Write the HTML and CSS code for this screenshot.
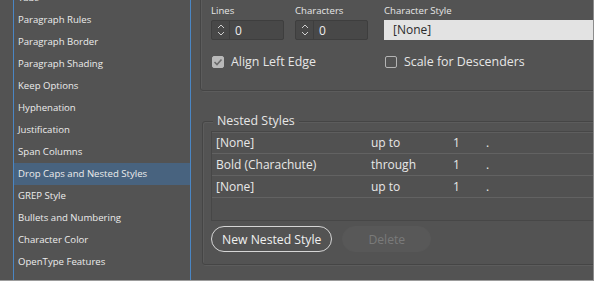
FILE: index.html
```html
<!DOCTYPE html>
<html lang="en">
<head>
    <meta charset="UTF-8">
    <title>Paragraph Style Options</title>
    <link rel="stylesheet" href="styles.css">
</head>
<body>
    <div class="window">
        <div class="sidebar">
            <ul class="category-list">
                <li>Tabs</li>
                <li>Paragraph Rules</li>
                <li>Paragraph Border</li>
                <li>Paragraph Shading</li>
                <li>Keep Options</li>
                <li>Hyphenation</li>
                <li>Justification</li>
                <li>Span Columns</li>
                <li class="selected">Drop Caps and Nested Styles</li>
                <li>GREP Style</li>
                <li>Bullets and Numbering</li>
                <li>Character Color</li>
                <li>OpenType Features</li>
                <li>Underline Options</li>
            </ul>
        </div>

        <div class="main">
            <div class="group drop-caps">
                <div class="field-row">
                    <div class="field lines-field">
                        <div class="field-label">Lines</div>
                        <div class="spinner">
                            <span class="arrows">
                                <svg width="10" height="16" viewBox="0 0 10 16">
                                    <path d="M2 6 L5 3 L8 6" fill="none" stroke="#cfcfcf" stroke-width="1"/>
                                    <path d="M2 10 L5 13 L8 10" fill="none" stroke="#cfcfcf" stroke-width="1"/>
                                </svg>
                            </span>
                            <span class="spin-value">0</span>
                        </div>
                    </div>
                    <div class="field chars-field">
                        <div class="field-label">Characters</div>
                        <div class="spinner">
                            <span class="arrows">
                                <svg width="10" height="16" viewBox="0 0 10 16">
                                    <path d="M2 6 L5 3 L8 6" fill="none" stroke="#cfcfcf" stroke-width="1"/>
                                    <path d="M2 10 L5 13 L8 10" fill="none" stroke="#cfcfcf" stroke-width="1"/>
                                </svg>
                            </span>
                            <span class="spin-value">0</span>
                        </div>
                    </div>
                    <div class="field style-field">
                        <div class="field-label">Character Style</div>
                        <div class="dropdown">[None]</div>
                    </div>
                </div>

                <div class="check-row">
                    <label class="check align-check">
                        <span class="box checked">
                            <svg width="12" height="12" viewBox="0 0 12 12">
                                <path d="M2.5 6 L5 8.5 L9.5 3.5" fill="none" stroke="#6b6b6b" stroke-width="1.6"/>
                            </svg>
                        </span>
                        Align Left Edge
                    </label>
                    <label class="check scale-check">
                        <span class="box"></span>
                        Scale for Descenders
                    </label>
                </div>
            </div>

            <div class="group nested">
                <div class="group-title">Nested Styles</div>
                <div class="nested-table">
                    <div class="nested-row">
                        <span class="col-style">[None]</span>
                        <span class="col-mode">up to</span>
                        <span class="col-count">1</span>
                        <span class="col-delim">.</span>
                    </div>
                    <div class="nested-row">
                        <span class="col-style">Bold (Charachute)</span>
                        <span class="col-mode">through</span>
                        <span class="col-count">1</span>
                        <span class="col-delim">.</span>
                    </div>
                    <div class="nested-row">
                        <span class="col-style">[None]</span>
                        <span class="col-mode">up to</span>
                        <span class="col-count">1</span>
                        <span class="col-delim">.</span>
                    </div>
                </div>
                <div class="button-row">
                    <button class="pill-btn">New Nested Style</button>
                    <button class="pill-btn disabled">Delete</button>
                </div>
            </div>
        </div>
    </div>
</body>
</html>
```

FILE: styles.css
```css
html, body {
    margin: 0;
    padding: 0;
    background-color: #535353;
    overflow: hidden;
}

body {
    font-family: 'Open Sans', 'Noto Sans', sans-serif;
    color: #e2e2e2;
}

.window {
    width: 593px;
    height: 280px;
    display: flex;
    overflow: hidden;
    border-right: 1px solid #8c8c8c;
    border-bottom: 1px solid #9c9c9c;
    background-color: #535353;
}

/* category list on the left */
.sidebar {
    width: 176px;
    margin-left: 13px;
    flex-shrink: 0;
    border-left: 1px solid #4a86c4;
    border-right: 1px solid #4a86c4;
    overflow: hidden;
}

.category-list {
    list-style: none;
    margin: -13px 0 0 0;
    padding: 0;
}

.category-list li {
    height: 22px;
    line-height: 22px;
    padding-left: 4px;
    font-size: 9.6px;
    color: #ececec;
    white-space: nowrap;
}

.category-list li.selected {
    background-color: #48637f;
}

/* right hand panel */
.main {
    flex: 1;
    position: relative;
    overflow: hidden;
}

.group {
    border: 1px solid #454545;
    box-shadow: 1px 1px 0 #5c5c5c, inset 1px 1px 0 #5c5c5c;
    border-radius: 3px;
}

.drop-caps {
    margin: -12px -20px 0 9px;
    height: 103px;
    padding: 0 0 0 10px;
    box-sizing: border-box;
}

.field-row {
    display: flex;
    margin-top: 15px;
}

.field-label {
    font-size: 9.6px;
    color: #e6e6e6;
    height: 16px;
    line-height: 14px;
}

.lines-field,
.chars-field {
    width: 84px;
}

.style-field {
    flex: 1;
    margin-left: 5px;
}

.spinner {
    width: 73px;
    height: 20px;
    box-sizing: border-box;
    border: 1px solid #3e3e3e;
    background-color: #484848;
    border-radius: 2px;
    display: flex;
    align-items: center;
}

.arrows {
    width: 17px;
    height: 18px;
    border-right: 1px solid #3e3e3e;
    display: flex;
    align-items: center;
    justify-content: center;
}

.spin-value {
    font-size: 12px;
    padding-left: 5px;
    color: #ededed;
}

.dropdown {
    height: 20px;
    line-height: 20px;
    background-color: #e3e3e3;
    color: #2b2b2b;
    font-size: 12px;
    padding-left: 9px;
}

.check-row {
    display: flex;
    margin-top: 13px;
}

.check {
    display: flex;
    align-items: center;
    font-size: 12.4px;
    color: #e6e6e6;
}

.align-check {
    width: 173px;
    padding-left: 1px;
}

.box {
    width: 12px;
    height: 12px;
    box-sizing: border-box;
    border: 1px solid #b4b4b4;
    border-radius: 2px;
    margin-right: 7px;
    display: flex;
}

.box.checked {
    background-color: #b9b9b9;
    border-color: #b9b9b9;
}

.box.checked svg {
    margin: -1px;
}

/* nested styles group */
.nested {
    margin: 30px -20px 0 11px;
    height: 144px;
    box-sizing: border-box;
    padding: 9px 0 0 8px;
    position: relative;
}

.group-title {
    position: absolute;
    top: -9px;
    left: 10px;
    padding: 0 4px;
    background-color: #535353;
    font-size: 12.4px;
    color: #e6e6e6;
    line-height: 16px;
}

.nested-table {
    height: 88px;
    border: 1px solid #474747;
    border-right: none;
    box-shadow: inset 0 1px 0 #5e5e5e;
    background-color: #515151;
}

.nested-row {
    display: flex;
    height: 21px;
    line-height: 21px;
    border-bottom: 1px solid #626262;
    font-size: 12px;
    color: #e8e8e8;
}

.col-style {
    width: 155px;
    padding-left: 4px;
}

.col-mode {
    width: 82px;
}

.col-count {
    width: 33px;
}

.button-row {
    display: flex;
    gap: 10px;
    margin-top: 5px;
}

.pill-btn {
    height: 26px;
    padding: 0 10px;
    border-radius: 13px;
    border: 1px solid #d6d6d6;
    background-color: transparent;
    color: #f0f0f0;
    font-family: inherit;
    font-size: 12.2px;
}

.pill-btn.disabled {
    width: 89px;
    border-color: #585858;
    background-color: #585858;
    color: #7a7a7a;
}
```
